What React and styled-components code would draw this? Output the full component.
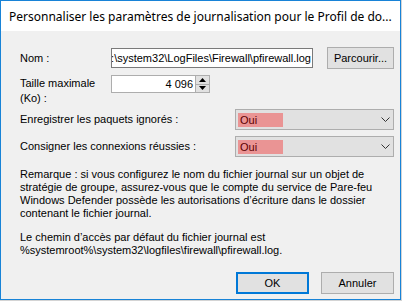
import styled, { createGlobalStyle } from "styled-components";

const GlobalStyle = createGlobalStyle`
  html, body {
    margin: 0;
    padding: 0;
    background: #d4d4d4;
  }
  * {
    box-sizing: border-box;
  }
`;

const Dialog = styled.div`
  width: 401px;
  height: 300px;
  border: 1px solid #1883d7;
  background: #f0f0f0;
  display: flex;
  flex-direction: column;
  font-family: "Liberation Sans", Arial, sans-serif;
  font-size: 11px;
  color: #000;
`;

const TitleBar = styled.div`
  height: 30px;
  background: #fff;
  display: flex;
  align-items: center;
  justify-content: space-between;
  padding: 0 9px 0 8px;
  font-family: "Noto Sans", "Open Sans", sans-serif;
  font-size: 12px;
  white-space: nowrap;
`;

const Close = styled.svg`
  width: 11px;
  height: 11px;
`;

const Body = styled.div`
  flex: 1;
  display: flex;
  flex-direction: column;
  padding: 16px 6px 0 19px;
`;

const Row = styled.div`
  display: flex;
  align-items: ${(p) => (p.$top ? "flex-start" : "center")};
  margin-top: ${(p) => p.$gap || 0}px;
`;

const Label = styled.div`
  width: ${(p) => p.$w || 91}px;
  line-height: ${(p) => p.$lh || 13}px;
  padding-top: ${(p) => p.$pt || 0}px;
  white-space: nowrap;
`;

const PathInput = styled.div`
  width: 202px;
  height: 20px;
  border: 1px solid #7a7a7a;
  background: #fff;
  display: flex;
  align-items: center;
  justify-content: flex-end;
  overflow: hidden;
  white-space: nowrap;
  padding-right: 1px;
`;

const Button = styled.div`
  width: ${(p) => p.$w || 73}px;
  height: 22px;
  margin-left: ${(p) => p.$ml || 0}px;
  background: #e1e1e1;
  border: ${(p) => (p.$default ? "2px solid #0078d7" : "1px solid #adadad")};
  display: flex;
  align-items: center;
  justify-content: center;
`;

const Spinner = styled.div`
  width: 99px;
  height: 18px;
  border: 1px solid #adadad;
  background: #fff;
  display: flex;
`;

const SpinValue = styled.div`
  flex: 1;
  text-align: right;
  line-height: 16px;
  padding-right: 2px;
`;

const SpinButtons = styled.div`
  width: 14px;
  display: flex;
  flex-direction: column;
  border-left: 1px solid #adadad;
`;

const SpinArrow = styled.div`
  flex: 1;
  background: #e1e1e1;
  display: flex;
  align-items: center;
  justify-content: center;
  & + & {
    border-top: 1px solid #adadad;
  }
`;

const Combo = styled.div`
  width: 159px;
  height: 21px;
  margin-left: auto;
  background: #e1e1e1;
  border: 1px solid #adadad;
  display: flex;
  align-items: center;
  justify-content: space-between;
  padding: 0 3px 0 2px;
`;

const Selected = styled.div`
  width: 45px;
  height: 14px;
  background: #ea9494;
  color: #5c0000;
  line-height: 14px;
  padding-left: 2px;
`;

const Note = styled.p`
  margin: ${(p) => p.$mt || 0}px 0 0;
  line-height: 13px;
  white-space: nowrap;
`;

const Footer = styled.div`
  display: flex;
  justify-content: flex-end;
  margin-top: auto;
  margin-bottom: 5px;
`;

function Triangle({ down }) {
  return (
    <svg width="7" height="4" viewBox="0 0 7 4">
      <path d={down ? "M0 0h7L3.5 4z" : "M0 4h7L3.5 0z"} fill="#000" />
    </svg>
  );
}

function Chevron() {
  return (
    <svg width="9" height="5" viewBox="0 0 9 5">
      <path d="M0.5 0.5L4.5 4.5L8.5 0.5" stroke="#333" fill="none" />
    </svg>
  );
}

export default function App() {
  return (
    <>
      <GlobalStyle />
      <Dialog>
        <TitleBar>
          <span>Personnaliser les paramètres de journalisation pour le Profil de do...</span>
          <Close viewBox="0 0 11 11">
            <path d="M0.5 0.5L10.5 10.5M10.5 0.5L0.5 10.5" stroke="#000" />
          </Close>
        </TitleBar>
        <Body>
          <Row>
            <Label>Nom :</Label>
            <PathInput>:\system32\LogFiles\Firewall\pfirewall.log</PathInput>
            <Button $w={67} $ml={14}>Parcourir...</Button>
          </Row>
          <Row $top $gap={6}>
            <Label $lh={15} $pt={1}>
              Taille maximale
              <br />
              (Ko) :
            </Label>
            <Spinner>
              <SpinValue>4 096</SpinValue>
              <SpinButtons>
                <SpinArrow>
                  <Triangle />
                </SpinArrow>
                <SpinArrow>
                  <Triangle down />
                </SpinArrow>
              </SpinButtons>
            </Spinner>
          </Row>
          <Row $gap={3}>
            <Label>Enregistrer les paquets ignorés :</Label>
            <Combo>
              <Selected>Oui</Selected>
              <Chevron />
            </Combo>
          </Row>
          <Row $gap={6}>
            <Label>Consigner les connexions réussies :</Label>
            <Combo>
              <Selected>Oui</Selected>
              <Chevron />
            </Combo>
          </Row>
          <Note $mt={11}>
            Remarque : si vous configurez le nom du fichier journal sur un objet de
            <br />
            stratégie de groupe, assurez-vous que le compte du service de Pare-feu
            <br />
            Windows Defender possède les autorisations d’écriture dans le dossier
            <br />
            contenant le fichier journal.
          </Note>
          <Note $mt={11}>
            Le chemin d’accès par défaut du fichier journal est
            <br />
            %systemroot%\system32\logfiles\firewall\pfirewall.log.
          </Note>
          <Footer>
            <Button $default>OK</Button>
            <Button $ml={12}>Annuler</Button>
          </Footer>
        </Body>
      </Dialog>
    </>
  );
}
